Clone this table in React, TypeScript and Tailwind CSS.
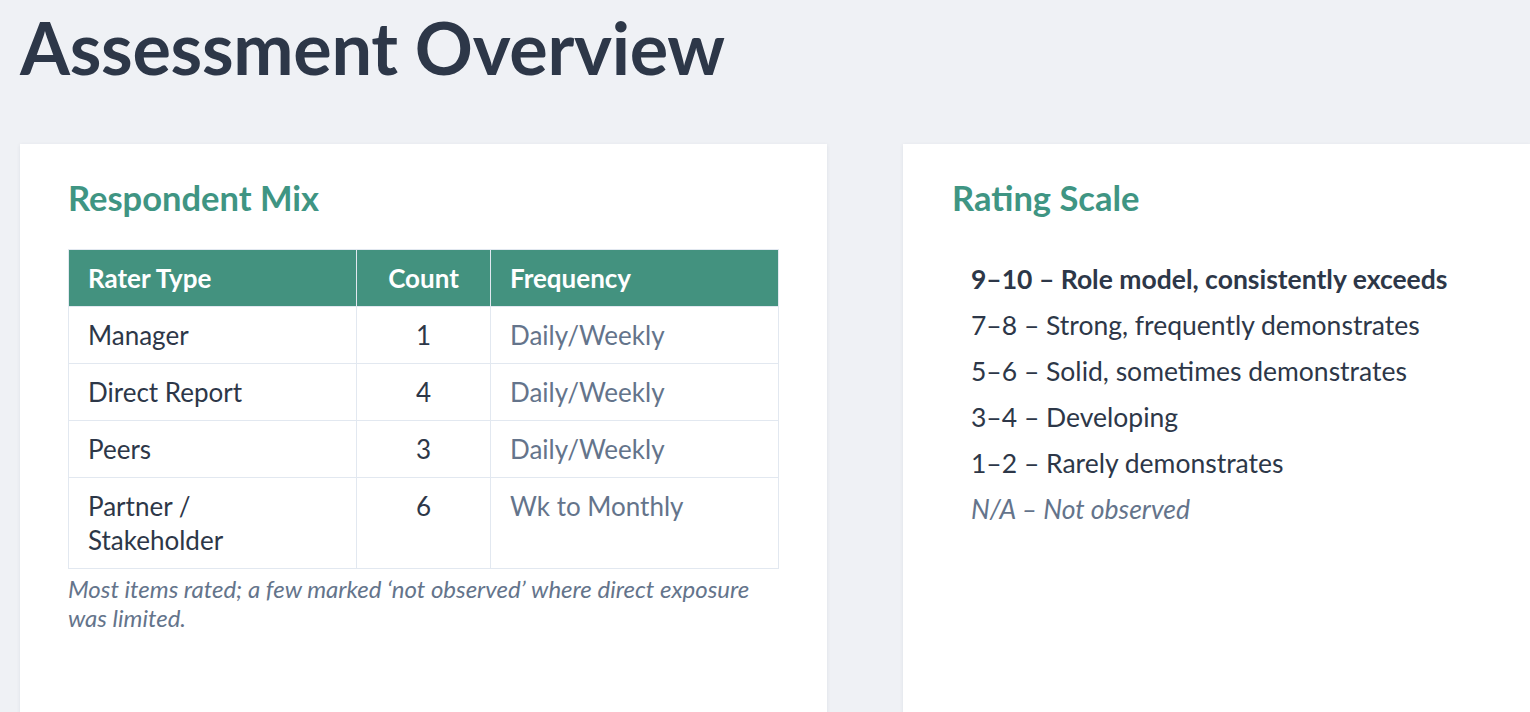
import React from 'react';

const rows = [
  { type: 'Manager', count: 1, freq: 'Daily/Weekly' },
  { type: 'Direct Report', count: 4, freq: 'Daily/Weekly' },
  { type: 'Peers', count: 3, freq: 'Daily/Weekly' },
  { type: 'Partner /\nStakeholder', count: 6, freq: 'Wk to Monthly' },
];

const scale = [
  '7–8 – Strong, frequently demonstrates',
  '5–6 – Solid, sometimes demonstrates',
  '3–4 – Developing',
  '1–2 – Rarely demonstrates',
];

export default function App() {
  return (
    <div className="min-h-screen h-[712px] overflow-hidden bg-[#eff1f5] font-['Lato','Liberation_Sans',sans-serif] text-[#2d3748]">
      <h1 className="pl-5 pt-[4px] text-[72px] font-bold leading-[86px] tracking-[-0.3px] text-[#2d3748]">
        Assessment Overview
      </h1>

      <div className="mt-[54px] flex gap-[76px] pl-5">
        {/* Respondent mix */}
        <section className="h-[600px] w-[807px] shrink-0 bg-white px-12 pt-[34px] shadow-[0_1px_4px_rgba(30,41,59,0.08)]">
          <h2 className="text-[34.5px] font-bold leading-[40px] text-[#3f9583]">Respondent Mix</h2>

          <table className="mt-[31px] w-[711px] border-collapse text-[26px]">
            <thead>
              <tr className="bg-[#43927f] text-white">
                <th className="w-[288px] border border-[#e2e8f0] py-[11px] pl-[19px] pr-5 text-left font-bold leading-[34px]">
                  Rater Type
                </th>
                <th className="w-[134px] border border-[#e2e8f0] px-5 py-[11px] text-center font-bold leading-[34px]">
                  Count
                </th>
                <th className="border border-[#e2e8f0] py-[11px] pl-[19px] pr-5 text-left font-bold leading-[34px]">
                  Frequency
                </th>
              </tr>
            </thead>
            <tbody>
              {rows.map((r) => (
                <tr key={r.type}>
                  <td className="whitespace-pre-line border border-[#e2e8f0] py-[11px] pl-[19px] pr-5 align-top leading-[34px] text-[#2d3748]">
                    {r.type}
                  </td>
                  <td className="border border-[#e2e8f0] px-5 py-[11px] text-center align-top leading-[34px] text-[#2d3748]">
                    {r.count}
                  </td>
                  <td className="border border-[#e2e8f0] py-[11px] pl-[19px] pr-5 align-top leading-[34px] text-[#64748b]">
                    {r.freq}
                  </td>
                </tr>
              ))}
            </tbody>
          </table>

          <p className="mt-[5px] w-[711px] text-[24px] italic leading-[29px] text-[#64748b]">
            Most items rated; a few marked ‘not observed’ where direct exposure was limited.
          </p>
        </section>

        {/* Rating scale */}
        <section className="h-[600px] flex-1 bg-white pl-[49px] pt-[34px] shadow-[0_1px_4px_rgba(30,41,59,0.08)]">
          <h2 className="text-[34.5px] font-bold leading-[40px] text-[#3f9583]">Rating Scale</h2>

          <ul className="mt-[38px] pl-[19px] text-[26.5px] leading-[46px]">
            <li className="font-bold text-[#2d3748]">9–10 – Role model, consistently exceeds</li>
            {scale.map((s) => (
              <li key={s} className="text-[#2d3748]">
                {s}
              </li>
            ))}
            <li className="italic text-[#64748b]">N/A – Not observed</li>
          </ul>
        </section>
      </div>
    </div>
  );
}
